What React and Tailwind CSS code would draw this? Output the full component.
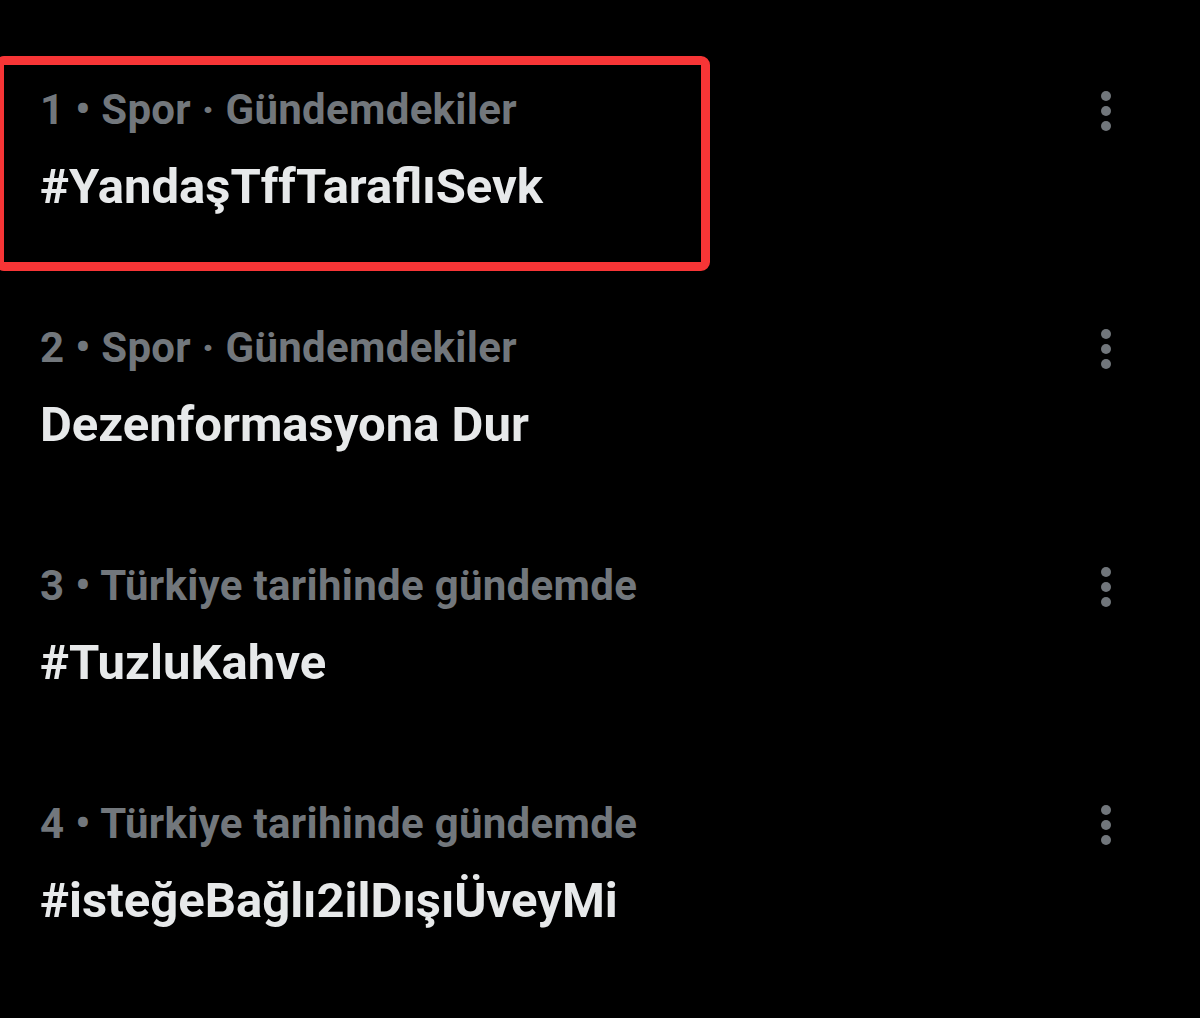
const trends = [
  { meta: "1 • Spor · Gündemdekiler", title: "#YandaşTffTaraflıSevk", highlight: true },
  { meta: "2 • Spor · Gündemdekiler", title: "Dezenformasyona Dur" },
  { meta: "3 • Türkiye tarihinde gündemde", title: "#TuzluKahve" },
  { meta: "4 • Türkiye tarihinde gündemde", title: "#isteğeBağlı2ilDışıÜveyMi" },
];

function MoreIcon() {
  return (
    <svg width="14" height="44" viewBox="0 0 14 44" className="shrink-0">
      <circle cx="7" cy="7" r="5" fill="#71767b" />
      <circle cx="7" cy="22" r="5" fill="#71767b" />
      <circle cx="7" cy="37" r="5" fill="#71767b" />
    </svg>
  );
}

function TrendRow({ meta, title, highlight }) {
  return (
    <div className="relative h-[238px] shrink-0 flex items-start justify-between pl-[40px] pr-[87px] pt-[86px]">
      {highlight && (
        <div className="absolute left-[-5px] top-[56px] w-[715px] h-[215px] border-[9px] border-[#f73536] rounded-[9px] pointer-events-none" />
      )}
      <div className="flex flex-col gap-[25px]">
        <span className="text-[42px] leading-[48px] font-bold text-[#72777c] tracking-[0.3px]">{meta}</span>
        <span className="text-[49px] leading-[56px] font-bold text-[#e7e9ea]">{title}</span>
      </div>
      <div className="mt-[3px]">
        <MoreIcon />
      </div>
    </div>
  );
}

export default function App() {
  return (
    <div
      className="w-[1200px] h-[1018px] bg-black overflow-hidden flex flex-col"
      style={{ fontFamily: "'Roboto', 'Noto Sans', sans-serif" }}
    >
      {trends.map((t) => (
        <TrendRow key={t.meta} {...t} />
      ))}
    </div>
  );
}
